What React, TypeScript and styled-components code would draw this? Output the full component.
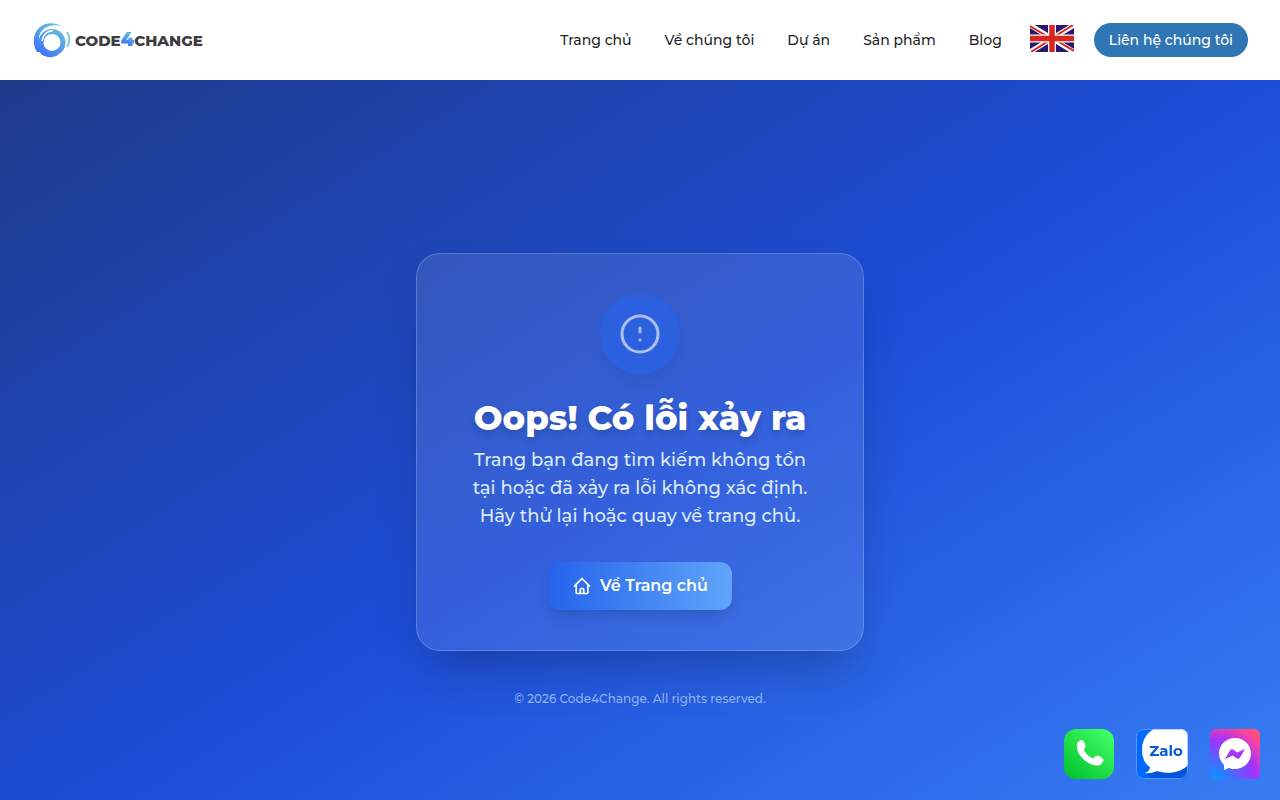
import React from "react";
import styled, { createGlobalStyle } from "styled-components";

const sans = `Montserrat, Inter, "Open Sans", sans-serif`;

const GlobalStyle = createGlobalStyle`
  *, *::before, *::after { box-sizing: border-box; }
  body { margin: 0; font-family: ${sans}; color: #1f1f1f; background: #fff; }
  h1, p { margin: 0; }
  a { color: inherit; text-decoration: none; }
  svg { display: block; flex: none; }
`;

const Header = styled.header`
  display: flex;
  align-items: center;
  justify-content: space-between;
  height: 80px;
  padding: 0 32px;
  background: #fff;
`;

const Brand = styled.a`
  display: flex;
  align-items: center;
  gap: 4px;
`;

const Wordmark = styled.span`
  display: flex;
  align-items: baseline;
  font-size: 15px;
  line-height: 20px;
  font-weight: 800;
  color: #3d3d3f;
`;

const Four = styled.span`
  font-size: 19px;
  font-weight: 900;
  background: linear-gradient(20deg, #4479fb 30%, #62b3de 80%);
  background-clip: text;
  color: transparent;
`;

const Nav = styled.nav`
  display: flex;
  align-items: center;
`;

const NavLinks = styled.div`
  display: flex;
  gap: 33px;
  margin-right: 28px;
`;

const NavLink = styled.a`
  font-size: 14px;
  line-height: 20px;
  font-weight: 500;
  white-space: nowrap;
`;

const LanguageButton = styled.button`
  padding: 0 0 3px;
  border: 0;
  margin-right: 20px;
  background: none;
  cursor: pointer;
`;

const ContactLink = styled.a`
  padding: 7px 15px;
  border-radius: 17px;
  background: #3076b5;
  color: #fff;
  font-size: 14px;
  line-height: 20px;
  font-weight: 500;
  white-space: nowrap;
`;

const Main = styled.main`
  display: flex;
  flex-direction: column;
  align-items: center;
  justify-content: center;
  gap: 40px;
  min-height: calc(100vh - 80px);
  padding-top: 80px;
  background: linear-gradient(to bottom right, #1e3a8a, #1d4ed8, #3b82f6) no-repeat;
  background-size: 100% calc(100% + 80px);
`;

const Card = styled.section`
  display: flex;
  flex-direction: column;
  align-items: center;
  width: 100%;
  max-width: 448px;
  padding: 40px;
  border: 1px solid rgba(255, 255, 255, 0.2);
  border-radius: 24px;
  background: rgba(255, 255, 255, 0.1);
  box-shadow: 0 25px 50px -12px rgba(0, 0, 0, 0.25);
  text-align: center;
`;

const IconDisc = styled.div`
  display: flex;
  align-items: center;
  justify-content: center;
  width: 80px;
  height: 80px;
  margin-bottom: 24px;
  border-radius: 50%;
  background: #2b60de;
  color: #aebeee;
  box-shadow: 0 10px 15px -3px rgba(0, 0, 0, 0.06);
`;

const Title = styled.h1`
  color: #fff;
  font-size: 34px;
  line-height: 40px;
  font-weight: 800;
  white-space: nowrap;
  text-shadow: 0 4px 6px rgba(0, 0, 0, 0.15);
`;

const Message = styled.p`
  margin: 8px 0 32px;
  color: #dbeafe;
  font-size: 18px;
  line-height: 28px;
  font-weight: 500;
`;

const HomeLink = styled.a`
  display: flex;
  align-items: center;
  gap: 8px;
  padding: 12px 24px;
  border-radius: 12px;
  background: linear-gradient(to right, #2563eb, #60a5fa);
  box-shadow: 0 10px 15px -3px rgba(0, 0, 0, 0.1), 0 4px 6px -4px rgba(0, 0, 0, 0.1);
  color: #fff;
  font-size: 16px;
  line-height: 24px;
  font-weight: 600;
`;

const Copyright = styled.p`
  color: rgba(191, 219, 254, 0.7);
  font-size: 12px;
  line-height: 16px;
  font-weight: 500;
`;

const ContactDock = styled.aside`
  position: fixed;
  right: 20px;
  bottom: 21px;
  display: flex;
  gap: 22px;
`;

const DockLink = styled.a`
  display: block;
`;

const RingLogo = () => (
  <svg width="39" height="36" viewBox="0 0 39 36" fill="none" aria-hidden="true">
    <defs>
      <linearGradient id="ring" x1="8" y1="32" x2="28" y2="3" gradientUnits="userSpaceOnUse">
        <stop stopColor="#3f74fb" />
        <stop offset="1" stopColor="#6cc3d6" />
      </linearGradient>
    </defs>
    <circle cx="20" cy="20.5" r="11" stroke="url(#ring)" strokeWidth="5" />
    <path
      fill="url(#ring)"
      d="M29 4C22 0 12 0 6 7C0 14 1 24 5 30L8 30L9 32C14 36 21 36 26 33L13 29C6 23 5 14 10 8.500C15 3.500 22 2.500 29 4Z"
    />
    <path d="M10 19C11 13 15 9 21 8.500" stroke="#fff" strokeWidth="1.5" />
    <path d="M35 10C38 15 38 20 35 25" stroke="#7fcbd6" strokeWidth="2" />
  </svg>
);

const UnionJack = () => (
  <svg width="44" height="27" viewBox="0 0 44 27" aria-hidden="true">
    <path fill="#27176f" d="M0 0h44v27H0z" />
    <path stroke="#fff" strokeWidth="5" d="M0 0L44 27M44 0L0 27" />
    <path stroke="#dc241f" strokeWidth="2" d="M0 1L20 13M44 26L24 14M43 0L24 12M1 27L20 15" />
    <path stroke="#fff" strokeWidth="8" d="M22 0V27M0 13.500H44" />
    <path stroke="#dc241f" strokeWidth="5.500" d="M22 0V27M0 13.500H44" />
  </svg>
);

const AlertIcon = () => (
  <svg width="48" height="48" viewBox="0 0 24 24" fill="none" stroke="currentColor" strokeWidth="1.5" strokeLinecap="round" aria-hidden="true">
    <circle cx="12" cy="12" r="9" />
    <path d="M12 9v2m0 4h.01" />
  </svg>
);

const HomeIcon = () => (
  <svg width="20" height="20" viewBox="0 0 24 24" fill="none" stroke="currentColor" strokeWidth="2" strokeLinecap="round" strokeLinejoin="round" aria-hidden="true">
    <path d="M3 12l2-2m0 0l7-7 7 7M5 10v10a1 1 0 001 1h3m10-11l2 2m-2-2v10a1 1 0 01-1 1h-3m-6 0a1 1 0 001-1v-4a1 1 0 011-1h2a1 1 0 011 1v4a1 1 0 001 1m-6 0h6" />
  </svg>
);

const PhoneBadge = () => (
  <svg width="50" height="50" viewBox="0 0 50 50" aria-hidden="true">
    <defs>
      <linearGradient id="phone" x1="5" y1="48" x2="42" y2="4" gradientUnits="userSpaceOnUse">
        <stop stopColor="#04c32c" />
        <stop offset="1" stopColor="#3ffb63" />
      </linearGradient>
    </defs>
    <rect width="50" height="50" rx="12" fill="url(#phone)" />
    <path
      fill="#fff"
      d="M14 13C16 10.500 19 10.500 20 13C22 17 22 18 20 20.500C20 23 26 29 29.500 29.500C31 26.500 34 26 37 28C40 30 40 32 38 34C35 38 29 37 23 33C17 29 13 23 13 18C12.500 16 13 14 14 13Z"
    />
  </svg>
);

const ZaloBadge = () => (
  <svg width="52" height="50" viewBox="0 0 52 50" aria-hidden="true">
    <defs>
      <clipPath id="zaloFrame">
        <rect width="52" height="50" rx="7" />
      </clipPath>
    </defs>
    <g clipPath="url(#zaloFrame)">
      <path fill="#0068ff" d="M0 0h52v50H0z" />
      <path fill="#0556dc" d="M10 44L16 50H52V34L30 42Z" />
      <path fill="#fff" d="M18 0C9 5 6 13 6 21C6 29 9 35 14 38C14 41 12 43 9 44C14 45 18 43 21 42C33 46 46 43 52 36V0Z" />
    </g>
    <rect x="0.500" y="0.500" width="51" height="49" rx="7" fill="none" stroke="#8bb8fb" strokeOpacity="0.6" />
    <text x="30" y="27" textAnchor="middle" fill="#0a5bdc" fontFamily={sans} fontSize="15" fontWeight="700">
      Zalo
    </text>
  </svg>
);

const MessengerBadge = () => (
  <svg width="50" height="50" viewBox="0 0 50 50" aria-hidden="true">
    <defs>
      <radialGradient id="messenger" cx="5" cy="51" r="67" gradientUnits="userSpaceOnUse">
        <stop stopColor="#0099ff" />
        <stop offset="0.600" stopColor="#a033ff" />
        <stop offset="0.850" stopColor="#ff4594" />
        <stop offset="1" stopColor="#ff5a66" />
      </radialGradient>
    </defs>
    <rect width="50" height="50" rx="6" fill="url(#messenger)" />
    <path fill="#fff" d="M25 9C16 9 9 16 9 24.500C9 29 11 33 14 36V41L19 39C21 40 23 40 25 40C34 40 41 33 41 24.500C41 16 34 9 25 9Z" />
    <path fill="#a735f2" d="M15 30L20 21.500C21 20 22.500 20 24 21L27 23.500L35 20L30 28.500C29 30 27.500 30 26 29L23 26.500Z" />
  </svg>
);

const links = ["Trang chủ", "Về chúng tôi", "Dự án", "Sản phẩm", "Blog"];

export default function App() {
  return (
    <>
      <GlobalStyle />
      <Header>
        <Brand href="#" aria-label="Code4Change">
          <RingLogo />
          <Wordmark>
            CODE<Four>4</Four>CHANGE
          </Wordmark>
        </Brand>
        <Nav>
          <NavLinks>
            {links.map((label) => (
              <NavLink key={label} href="#">
                {label}
              </NavLink>
            ))}
          </NavLinks>
          <LanguageButton type="button" aria-label="English">
            <UnionJack />
          </LanguageButton>
          <ContactLink href="#">Liên hệ chúng tôi</ContactLink>
        </Nav>
      </Header>
      <Main>
        <Card>
          <IconDisc>
            <AlertIcon />
          </IconDisc>
          <Title>Oops! Có lỗi xảy ra</Title>
          <Message>
            Trang bạn đang tìm kiếm không tồn
            <br />
            tại hoặc đã xảy ra lỗi không xác định.
            <br />
            Hãy thử lại hoặc quay về trang chủ.
          </Message>
          <HomeLink href="#">
            <HomeIcon />
            Về Trang chủ
          </HomeLink>
        </Card>
        <Copyright>© 2026 Code4Change. All rights reserved.</Copyright>
      </Main>
      <ContactDock>
        <DockLink href="#" aria-label="Phone">
          <PhoneBadge />
        </DockLink>
        <DockLink href="#" aria-label="Zalo">
          <ZaloBadge />
        </DockLink>
        <DockLink href="#" aria-label="Messenger">
          <MessengerBadge />
        </DockLink>
      </ContactDock>
    </>
  );
}
